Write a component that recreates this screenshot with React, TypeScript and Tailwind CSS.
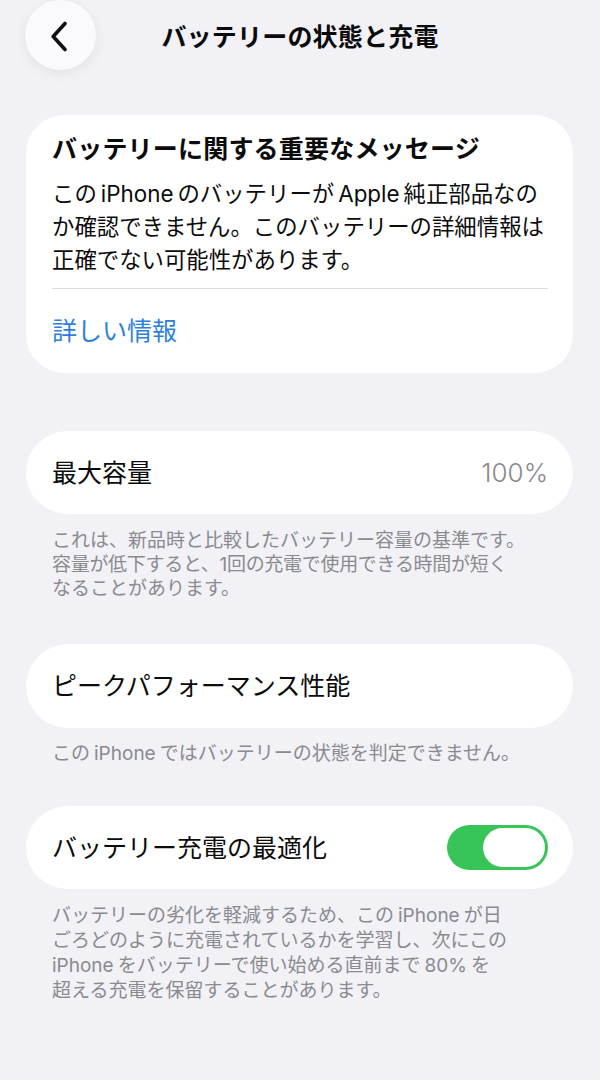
import React from "react";

function En({ children, start = false }: { children: React.ReactNode; start?: boolean }) {
  return <span className={start ? "mr-[4px]" : "mx-[4px]"}>{children}</span>;
}

function BackButton() {
  return (
    <button
      type="button"
      className="flex h-[70px] w-[71px] items-center justify-center rounded-full bg-[#fafafc] shadow-[0_3px_14px_rgba(0,0,0,0.07)]"
    >
      <svg width="18" height="31" viewBox="0 0 18 31" className="mr-[3px] mt-[2px]">
        <path
          d="M15 2.5 L3.2 15.5 L15 28.5"
          fill="none"
          stroke="#111113"
          strokeWidth="3.6"
          strokeLinecap="round"
          strokeLinejoin="round"
        />
      </svg>
    </button>
  );
}

function Toggle() {
  return (
    <div className="flex h-[45px] w-[101px] items-center justify-end rounded-full bg-[#37c55a] p-[3px]">
      <div className="h-[39px] w-[62px] rounded-full bg-white" />
    </div>
  );
}

export default function App() {
  return (
    <div className="min-h-[1080px] w-[600px] bg-[#f1f1f6] font-['Inter','Noto_Sans_CJK_JP',sans-serif] text-[#0b0b0c]">
      {/* navigation bar */}
      <header className="grid h-[70px] grid-cols-[1fr_auto_1fr] items-center">
        <div className="pl-[25px]">
          <BackButton />
        </div>
        <h1 className="mt-[4px] text-[25px] font-bold leading-[34px] tracking-[0.2px]">
          バッテリーの状態と充電
        </h1>
        <div />
      </header>

      {/* important message */}
      <section className="ml-[26px] mr-[27px] mt-[45px] rounded-[38px] bg-white pl-[26px] pr-[25px] pb-[25px] pt-[17px]">
        <h2 className="whitespace-nowrap text-[25px] font-bold leading-[34px] tracking-[0.2px]">
          バッテリーに関する重要なメッセージ
        </h2>
        <p className="mt-[10.5px] whitespace-nowrap text-[22.4px] leading-[33px]">
          この<En>iPhone</En>のバッテリーが<En>Apple</En>純正部品なの
          <br />
          か確認できません。このバッテリーの詳細情報は
          <br />
          正確でない可能性があります。
        </p>
        <div className="mt-[12.5px] h-px bg-[#dedee3]" />
        <p className="mt-[25px] text-[25px] leading-[34px] text-[#2d7fdb]">詳しい情報</p>
      </section>

      {/* maximum capacity */}
      <section className="ml-[26px] mr-[27px] mt-[58px] flex h-[83px] items-center justify-between rounded-full bg-white pl-[26px] pr-[25px]">
        <span className="text-[25px] leading-[34px]">最大容量</span>
        <span className="text-[26px] font-light leading-[34px] text-[#88888d]">100%</span>
      </section>
      <p className="mt-[15px] whitespace-nowrap pl-[52px] text-[19px] leading-[24px] text-[#8a8a8f]">
        これは、新品時と比較したバッテリー容量の基準です。
        <br />
        <span className="tracking-[-0.3px]">容量が低下すると、1回の充電で使用できる時間が短く</span>
        <br />
        なることがあります。
      </p>

      {/* peak performance */}
      <section className="ml-[26px] mr-[27px] mt-[43px] flex h-[84px] items-center rounded-full bg-white pl-[26px]">
        <span className="text-[25px] leading-[34px]">ピークパフォーマンス性能</span>
      </section>
      <p className="mt-[14px] whitespace-nowrap pl-[52px] text-[19px] leading-[24px] text-[#8a8a8f]">
        この<En>iPhone</En>ではバッテリーの状態を判定できません。
      </p>

      {/* optimized charging */}
      <section className="ml-[26px] mr-[27px] mt-[40px] flex h-[83px] items-center justify-between rounded-full bg-white pl-[26px] pr-[25px]">
        <span className="text-[25px] leading-[34px]">バッテリー充電の最適化</span>
        <Toggle />
      </section>
      <p className="mt-[14px] whitespace-nowrap pl-[52px] text-[19px] leading-[25px] text-[#8a8a8f]">
        バッテリーの劣化を軽減するため、この<En>iPhone</En>が日
        <br />
        ごろどのように充電されているかを学習し、次にこの
        <br />
        <En start>iPhone</En>をバッテリーで使い始める直前まで<En>80%</En>を
        <br />
        超える充電を保留することがあります。
      </p>
    </div>
  );
}
